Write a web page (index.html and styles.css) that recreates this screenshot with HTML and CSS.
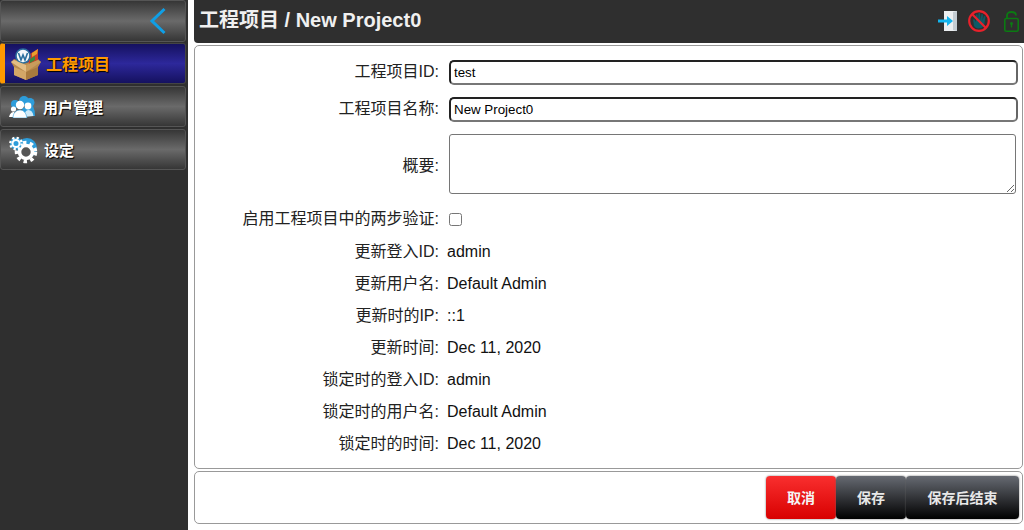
FILE: index.html
```html
<!DOCTYPE html>
<html lang="zh-CN">
  <head>
    <meta charset="UTF-8" />
    <meta name="viewport" content="width=device-width, initial-scale=1.0" />
    <title>工程项目 / New Project0</title>
    <link rel="stylesheet" href="styles.css">
  </head>
  <body>
    <div class="app">
      <aside class="sidebar">
        <div class="side-top">
          <svg class="back-icon" width="18" height="28" viewBox="0 0 18 28">
            <path d="M15.5 2 L3 14 L15.5 26" fill="none" stroke="#0f9fe6" stroke-width="3" />
          </svg>
        </div>
        <a class="side-item active">
          <svg class="side-icon box" width="30" height="32" viewBox="0 0 30 32">
            <path d="M15 15 L3 11 L0 14 L3 19 L3 27 L15 32 L27 27 L27 19 L30 14 L27 11 Z" fill="#b98a4c" />
            <path d="M17 7 L27 1 L27 12 L18 16 Z" fill="#c8402a" />
            <path d="M21 5 L27 1 L26 6 L21 9 Z" fill="#e8a02c" />
            <path d="M19 11 L24 8 L24 12 L19 15 Z" fill="#3b8a3e" />
            <circle cx="12" cy="8" r="7" fill="#f4f8fb" stroke="#2a6f9e" stroke-width="1.6" />
            <path d="M7.500 5 L10 12 L12 7 L14 12 L16.500 5" fill="none" stroke="#2a6f9e" stroke-width="1.6" />
            <path d="M3 19 L15 24 L15 32 L3 27 Z" fill="#d3a767" />
            <path d="M27 19 L15 24 L15 32 L27 27 Z" fill="#a87a3e" />
            <path d="M0 14 L3 12 L15 17 L15 24 Z" fill="#e3bd85" />
            <path d="M30 14 L27 12 L15 17 L15 24 Z" fill="#c99c5c" />
          </svg>
          <span class="side-label">工程项目</span>
        </a>
        <a class="side-item">
          <svg class="side-icon users" width="26" height="22" viewBox="0 0 26 22">
            <circle cx="15" cy="5" r="5" fill="#2d9ddb" />
            <circle cx="21" cy="6.500" r="4.500" fill="#2d9ddb" />
            <circle cx="6" cy="8" r="4" fill="#2d9ddb" />
            <path d="M13 12 L24 10 Q26 14 26 20 L15 20 Z" fill="#2d9ddb" />
            <circle cx="11" cy="9" r="4.200" fill="#fff" />
            <circle cx="19" cy="10" r="3.400" fill="#fff" />
            <circle cx="4.500" cy="13" r="2.600" fill="#fff" />
            <path d="M15 21 C15 17 17 14 19.500 14 C22 14 24 16 24.500 20 Z" fill="#cfeaf8" />
            <path d="M0 21 C1 17 3 16 5 16 L8 21 Z" fill="#fff" />
            <path d="M4 22 C4 17 7 14 11 14 C15 14 17 17 18 22 Z" fill="#fff" stroke="#2d9ddb" stroke-width="0.600" />
          </svg>
          <span class="side-label">用户管理</span>
        </a>
        <a class="side-item">
          <svg class="side-icon gears" width="29" height="28" viewBox="0 0 29 28">
            <circle cx="18" cy="12" r="10" fill="#2d9ddb" />
            <circle cx="17" cy="16" r="9.500" fill="none" stroke="#fff" stroke-width="3.500" stroke-dasharray="3.500 3.400" />
            <circle cx="17" cy="16" r="6.500" fill="#555" stroke="#fff" stroke-width="3.600" />
            <circle cx="7" cy="7.500" r="6" fill="#2d9ddb" />
            <circle cx="7" cy="7.500" r="5.700" fill="none" stroke="#fff" stroke-width="2.400" stroke-dasharray="2.200 2.270" />
            <circle cx="7" cy="7.500" r="3.500" fill="#2d9ddb" stroke="#fff" stroke-width="2" />
          </svg>
          <span class="side-label">设定</span>
        </a>
      </aside>

      <main class="main">
        <header class="title-bar">
          <h1>工程项目 / New Project0</h1>
          <div class="title-icons">
            <svg class="icon-exit" width="19" height="20" viewBox="0 0 19 20">
              <path d="M6 0 L19 0 L19 20 L6 20 Z" fill="#eceff1" />
              <path d="M15 1 L19 0 L19 20 L15 19 Z" fill="#c4ccd2" />
              <path d="M0 8.500 L9 8.500 L9 5 L15 10 L9 15 L9 11.500 L0 11.500 Z" fill="#12b4ee" />
            </svg>
            <svg class="icon-ban" width="22" height="22" viewBox="0 0 22 22">
              <path d="M6 16 L5 9.500 L6.500 9.500 L8 12 L8 4.500 L9.500 4.500 L10 10 L10.500 3 L12 3 L12.500 10 L13.500 4 L15 4.500 L14.500 10.500 L16 6 L17.500 6.500 L16 16 Q14 18.500 10 18.500 Q7.500 18 6 16 Z" fill="#0c5a66" />
              <circle cx="11" cy="11" r="9.800" fill="none" stroke="#e8212b" stroke-width="2.200" />
              <path d="M4 4 L18 18" stroke="#e8212b" stroke-width="2.200" />
            </svg>
            <svg class="icon-lock" width="15" height="21" viewBox="0 0 15 21">
              <path d="M3 7 L3 4.500 Q3 1 7.500 1 Q12 1 12 4.500" fill="none" stroke="#0b7a12" stroke-width="1.800" />
              <rect x="0.800" y="7.500" width="13.400" height="12.700" rx="1.500" fill="none" stroke="#0b7a12" stroke-width="1.600" />
              <circle cx="7.500" cy="12.500" r="1.500" fill="#0b7a12" />
              <path d="M7.500 12.500 L7.500 16.500" stroke="#0b7a12" stroke-width="1.300" />
            </svg>
          </div>
        </header>

        <section class="panel form-panel">
          <div class="row input-row">
            <label class="row-label">工程项目ID:</label>
            <input class="text-input" type="text" value="test" />
          </div>
          <div class="row input-row">
            <label class="row-label">工程项目名称:</label>
            <input class="text-input" type="text" value="New Project0" />
          </div>
          <div class="row area-row">
            <label class="row-label area-label">概要:</label>
            <textarea class="text-area"></textarea>
          </div>
          <div class="row info-row check-row">
            <label class="row-label">启用工程项目中的两步验证:</label>
            <input class="check" type="checkbox" />
          </div>
          <div class="row info-row">
            <span class="row-label">更新登入ID:</span>
            <span class="row-value">admin</span>
          </div>
          <div class="row info-row">
            <span class="row-label">更新用户名:</span>
            <span class="row-value">Default Admin</span>
          </div>
          <div class="row info-row">
            <span class="row-label">更新时的IP:</span>
            <span class="row-value">::1</span>
          </div>
          <div class="row info-row">
            <span class="row-label">更新时间:</span>
            <span class="row-value">Dec 11, 2020</span>
          </div>
          <div class="row info-row">
            <span class="row-label">锁定时的登入ID:</span>
            <span class="row-value">admin</span>
          </div>
          <div class="row info-row">
            <span class="row-label">锁定时的用户名:</span>
            <span class="row-value">Default Admin</span>
          </div>
          <div class="row info-row">
            <span class="row-label">锁定时的时间:</span>
            <span class="row-value">Dec 11, 2020</span>
          </div>
        </section>

        <footer class="panel button-panel">
          <button class="btn btn-cancel">取消</button>
          <button class="btn">保存</button>
          <button class="btn btn-wide">保存后结束</button>
        </footer>
      </main>
    </div>
  </body>
</html>
```

FILE: styles.css
```css
html, body {
  margin: 0;
  height: 530px;
  overflow: hidden;
  background-color: #fff;
}
body {
  font-family: "Liberation Sans", "Noto Sans CJK SC", sans-serif;
  font-size: 16px;
  color: #111;
}
.app {
  display: flex;
  height: 530px;
}
.sidebar {
  width: 188px;
  flex-shrink: 0;
  background-color: #2f2f2f;
  box-sizing: border-box;
  padding-right: 1px;
}
.side-top, .side-item {
  display: flex;
  align-items: center;
  box-sizing: border-box;
  margin: 0 1px 2px 0;
  border: 1px solid #555;
  border-radius: 3px;
  background: linear-gradient(#363636, #6a6a6a 50%, #363636);
}
.side-top {
  height: 42px;
  justify-content: flex-end;
  padding-right: 18px;
  margin-bottom: 1px;
}
.side-item {
  height: 41px;
  padding-left: 8px;
  font-weight: bold;
  font-size: 15px;
  color: #fff;
  text-shadow: 1px 1px 1px #000;
}
.side-item.active {
  padding-left: 6px;
  border-left: 5px solid #ff9900;
  border-color: #444 #444 #444 #ff9900;
  background: linear-gradient(#15115f, #2d289b 50%, #15115f);
  color: #ff9900;
  font-size: 16px;
}
.side-item.active .side-label {
  margin-bottom: 2px;
}
.side-icon {
  flex-shrink: 0;
}
.box {
  margin-right: 5px;
}
.users {
  margin-right: 8px;
}
.gears {
  margin-right: 6px;
}

.main {
  flex: 1;
  min-width: 0;
  padding-left: 6px;
  display: flex;
  flex-direction: column;
}
.title-bar {
  height: 43px;
  flex-shrink: 0;
  display: flex;
  align-items: center;
  justify-content: space-between;
  box-sizing: border-box;
  padding: 0 5px 1px 5px;
  background-color: #2f2f2f;
  border-radius: 0 0 0 4px;
}
.title-bar h1 {
  margin: 0 0 2px;
  font-size: 20px;
  line-height: 24px;
  font-weight: bold;
  color: #f0f0f0;
}
.title-icons {
  display: flex;
  align-items: center;
}
.icon-ban {
  margin-left: 11px;
}
.icon-lock {
  margin-left: 14px;
}
.panel {
  box-sizing: border-box;
  margin-right: 1px;
  border: 1px solid #999;
  border-radius: 5px;
  background-color: #fff;
}
.form-panel {
  margin-top: 2px;
  height: 424px;
  padding-top: 10px;
}
.button-panel {
  margin-top: 2px;
  height: 53px;
  display: flex;
  justify-content: flex-end;
  align-items: flex-start;
  padding: 4px 3px 0 0;
}

.row {
  display: flex;
  align-items: center;
}
.row-label {
  width: 244px;
  flex-shrink: 0;
  text-align: right;
  line-height: 20px;
  color: #222;
}
.area-label {
  padding-top: 3px;
}
.row-value {
  margin-left: 8px;
  line-height: 20px;
}
.input-row {
  height: 32px;
  margin-bottom: 5px;
}
.area-row {
  height: 60px;
  margin: 9px 0;
}
.info-row {
  height: 32px;
}
.check-row {
  margin-bottom: 1px;
}
.text-input {
  width: 569px;
  height: 25px;
  margin-left: 10px;
  box-sizing: border-box;
  padding: 1px 3px;
  border: 2px solid;
  border-color: #222 #666 #777 #222;
  border-radius: 5px;
  font-family: "Liberation Sans", sans-serif;
  font-size: 13.33px;
  color: #000;
  outline: none;
}
.text-area {
  width: 567px;
  height: 60px;
  margin-left: 10px;
  box-sizing: border-box;
  border: 1px solid #767676;
  border-radius: 3px;
  resize: vertical;
}
.check {
  width: 13px;
  height: 13px;
  margin: 0 0 0 10px;
}

.btn {
  height: 43px;
  width: 70px;
  box-sizing: border-box;
  border: none;
  border-radius: 4px;
  padding: 0 0 2px;
  background: linear-gradient(#666a72, #000);
  color: #e8e8e8;
  font-family: "Liberation Sans", "Noto Sans CJK SC", sans-serif;
  font-size: 14px;
  font-weight: bold;
  box-shadow: 0 0 2px #666;
}
.btn-cancel {
  background: linear-gradient(#f92f2f, #d80000);
  color: #f5f5f5;
}
.btn-wide {
  width: 113px;
}
```
